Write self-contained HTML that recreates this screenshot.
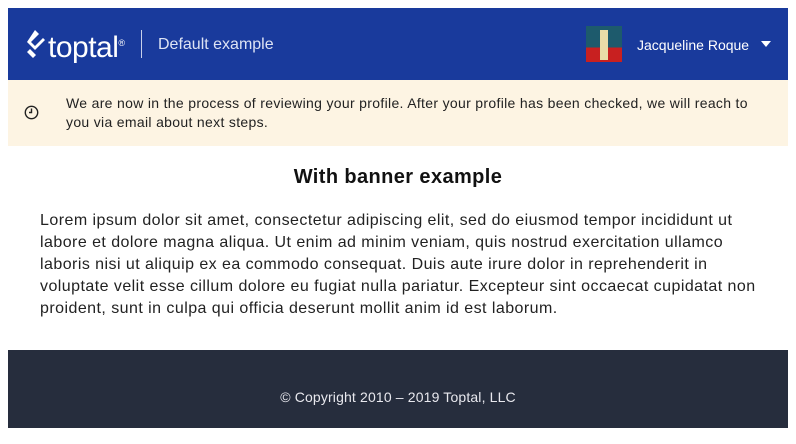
<!DOCTYPE html>
<html><head><style>
body{margin:8px;font-family:"Liberation Sans",sans-serif;background:#fff;width:780px}
.hdr{height:72px;background:#193a9c;position:relative;color:#fff}
.logo{position:absolute;left:40px;top:18px;font-size:30px;letter-spacing:-0.5px;line-height:34px}
.mark{position:absolute;left:16px;top:21px}
.sep{position:absolute;left:133px;top:22px;width:1px;height:28px;background:#c8d0ea}
.title{position:absolute;left:150px;top:28px;font-size:16px;color:#dde3f4}
.av{position:absolute;left:578px;top:18px;width:36px;height:36px;background:linear-gradient(180deg,#1d5a6c 0 60%,#c82020 60%)}
.av i{position:absolute;left:14px;top:4px;width:8px;height:30px;background:#e9dca8}
.name{position:absolute;left:629px;top:29px;font-size:14px}
.tri{position:absolute;left:753px;top:33px;border-left:5px solid transparent;border-right:5px solid transparent;border-top:6px solid #fff}
.ban{height:66px;background:#fdf4e3;position:relative;font-size:14px;line-height:19px;color:#222}
.ban .t{position:absolute;left:58px;top:14px;white-space:nowrap;letter-spacing:0.32px}
.clk{position:absolute;left:16px;top:25px}
h1{margin:0;text-align:center;font-size:20px;font-weight:bold;padding-top:20px;height:36px;color:#111;letter-spacing:0.4px}
p{margin:0 32px;font-size:16px;line-height:22px;color:#222;height:142px;padding-top:8px;white-space:nowrap;letter-spacing:0.45px}
.ft{height:78px;background:#262d3d;color:#e8e8ee;text-align:center;font-size:14px;line-height:94px;margin-top:-2px;letter-spacing:0.15px}
</style></head><body>
<div class="hdr">
<svg class="mark" width="22" height="30" viewBox="0 0 22 30"><path d="M11 1 L15 5 L7 13 L11 17 L19 9 L21 11 L11 21 L3 13 Z M6 20 L12 26 L9 29 L3 23 Z" fill="#fff"/></svg>
<div class="logo">toptal<sup style="font-size:9px">®</sup></div>
<div class="sep"></div>
<div class="title">Default example</div>
<div class="av"><i></i></div>
<div class="name">Jacqueline Roque</div>
<div class="tri"></div>
</div>
<div class="ban"><svg class="clk" width="15" height="15" viewBox="0 0 15 15"><circle cx="7.5" cy="7.5" r="6.2" fill="none" stroke="#222" stroke-width="1.4"/><path d="M7.5 3.5 V7.5 H5" fill="none" stroke="#222" stroke-width="1.4"/></svg><div class="t">We are now in the process of reviewing your profile. After your profile has been checked, we will reach to<br>you via email about next steps.</div></div>
<h1>With banner example</h1>
<p>Lorem ipsum dolor sit amet, consectetur adipiscing elit, sed do eiusmod tempor incididunt ut<br>labore et dolore magna aliqua. Ut enim ad minim veniam, quis nostrud exercitation ullamco<br>laboris nisi ut aliquip ex ea commodo consequat. Duis aute irure dolor in reprehenderit in<br>voluptate velit esse cillum dolore eu fugiat nulla pariatur. Excepteur sint occaecat cupidatat non<br>proident, sunt in culpa qui officia deserunt mollit anim id est laborum.</p>
<div class="ft">© Copyright 2010 – 2019 Toptal, LLC</div>
</body></html>
